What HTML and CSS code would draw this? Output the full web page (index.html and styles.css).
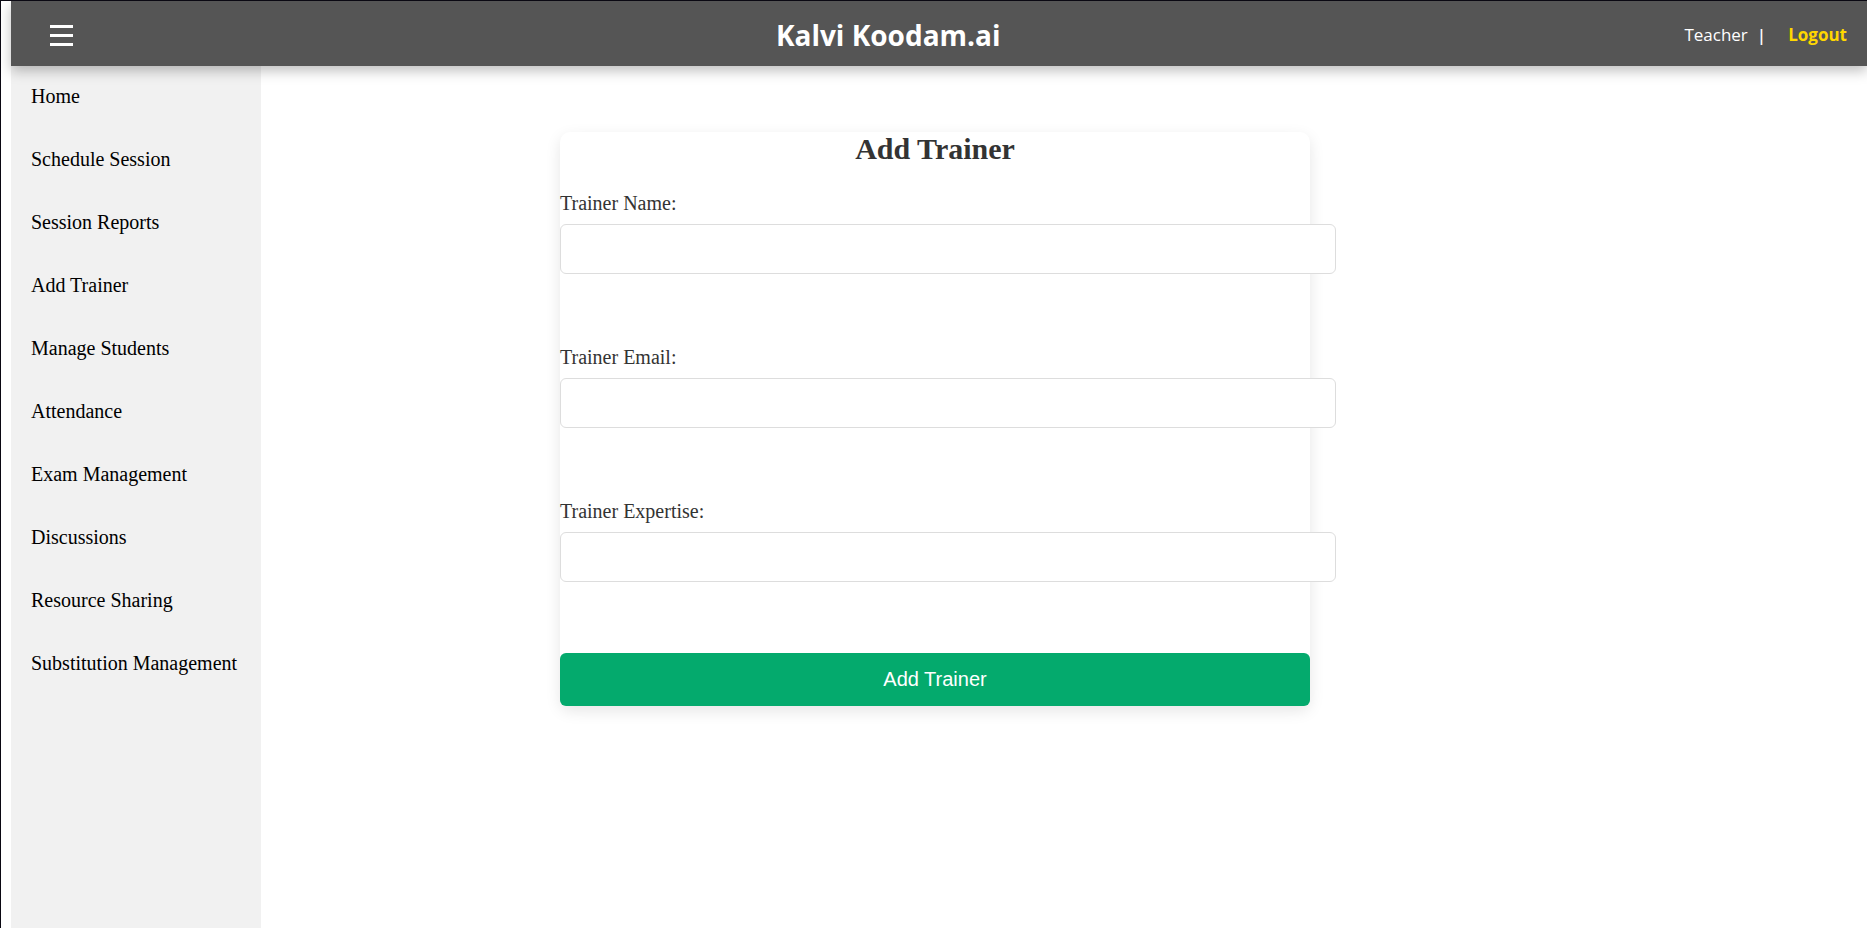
FILE: index.html
```html
<!DOCTYPE html>
<html lang="en">
<head>
<meta charset="utf-8">
<title>Kalvi Koodam.ai</title>
<link rel="stylesheet" href="styles.css">
</head>
<body class="page">
<header class="topbar">
  <button class="menu-button" type="button" aria-label="Toggle menu">
    <svg class="menu-icon" width="23" height="22" viewBox="0 0 23 22" aria-hidden="true"><path d="M0 1.5h23M0 10.5h23M0 19.5h23" stroke="#fff" stroke-width="3"/></svg>
  </button>
  <h1 class="brand">Kalvi Koodam.ai</h1>
  <div class="account">
    <span class="role">Teacher</span>
    <span class="divider">|</span>
    <a class="logout" href="#">Logout</a>
  </div>
</header>
<div class="shell">
  <nav class="sidebar">
    <a class="nav-link" href="#">Home</a>
    <a class="nav-link" href="#">Schedule Session</a>
    <a class="nav-link" href="#">Session Reports</a>
    <a class="nav-link" href="#">Add Trainer</a>
    <a class="nav-link" href="#">Manage Students</a>
    <a class="nav-link" href="#">Attendance</a>
    <a class="nav-link" href="#">Exam Management</a>
    <a class="nav-link" href="#">Discussions</a>
    <a class="nav-link" href="#">Resource Sharing</a>
    <a class="nav-link" href="#">Substitution Management</a>
  </nav>
  <main class="content">
    <section class="card">
      <h2 class="card-title">Add Trainer</h2>
      <form class="form">
        <div class="field">
          <label class="label" for="name">Trainer Name:</label>
          <input class="input" id="name" type="text">
        </div>
        <div class="field">
          <label class="label" for="email">Trainer Email:</label>
          <input class="input" id="email" type="email">
        </div>
        <div class="field">
          <label class="label" for="expertise">Trainer Expertise:</label>
          <input class="input" id="expertise" type="text">
        </div>
        <button class="submit" type="button">Add Trainer</button>
      </form>
    </section>
  </main>
</div>
</body>
</html>
```
FILE: styles.css
```css
.page {
  box-sizing: border-box;
  display: flex;
  flex-direction: column;
  min-height: 100vh;
  margin: 0;
  padding-left: 10px;
  border-top: 1px solid #0a0812;
  border-left: 1px solid #0a0812;
  background: #fff;
  font-family: "Liberation Serif", "Times New Roman", serif;
  font-size: 20px;
  line-height: 23px;
}

.topbar {
  position: relative;
  z-index: 1;
  box-sizing: border-box;
  display: flex;
  align-items: center;
  justify-content: space-between;
  height: 65px;
  padding: 2px 20px 0;
  background: #555;
  box-shadow: 0 5px 12px rgba(0, 0, 0, 0.25);
  color: #fff;
  font-family: "Segoe UI", "Open Sans", "Noto Sans", sans-serif;
}

.menu-button {
  display: flex;
  padding: 4px 19px 2px;
  border: 0;
  background: none;
  cursor: pointer;
}

.brand {
  margin: 0;
  font-size: 28px;
  line-height: 40px;
}

.account {
  display: flex;
  align-items: center;
  font-size: 17px;
}

.divider {
  margin: 0 22px 0 9px;
  font-weight: 600;
}

.logout {
  color: #ffd700;
  font-weight: 700;
  text-decoration: none;
}

.shell {
  flex: 1;
  display: grid;
  grid-template-columns: 250px 1fr;
}

.sidebar {
  grid-area: 1 / 1;
  z-index: 0;
  display: flex;
  flex-direction: column;
  padding: 0 0 20px;
  background: #f1f1f1;
}

.nav-link {
  padding: 19px 20px 21px;
  color: #000;
  text-decoration: none;
}

/* The content column spans the whole shell so the card centres in the window. */
.content {
  grid-area: 1 / 1 / 2 / 3;
  display: flex;
  justify-content: center;
  align-items: flex-start;
  padding: 66px 8px 40px 0;
}

.card {
  width: 750px;
  border-radius: 10px;
  background: #fff;
  box-shadow: 0 5px 15px rgba(0, 0, 0, 0.1);
  color: #333;
}

.card-title {
  margin: 0 0 25px;
  font-size: 30px;
  line-height: 34px;
  text-align: center;
}

.form {
  display: flex;
  flex-direction: column;
  gap: 71px;
}

.field {
  display: flex;
  flex-direction: column;
  gap: 8px;
}

.label {
  line-height: 25px;
}

.input {
  box-sizing: content-box;
  width: 100%;
  height: 24px;
  padding: 12px;
  border: 1px solid #ddd;
  border-radius: 6px;
  background: #fff;
  font-family: "Liberation Sans", Arial, sans-serif;
  font-size: 20px;
}

.submit {
  padding: 15px;
  border: 0;
  border-radius: 6px;
  background: #04aa6d;
  color: #fff;
  font-family: "Liberation Sans", Arial, sans-serif;
  font-size: 20px;
  line-height: 23px;
  cursor: pointer;
}
```
